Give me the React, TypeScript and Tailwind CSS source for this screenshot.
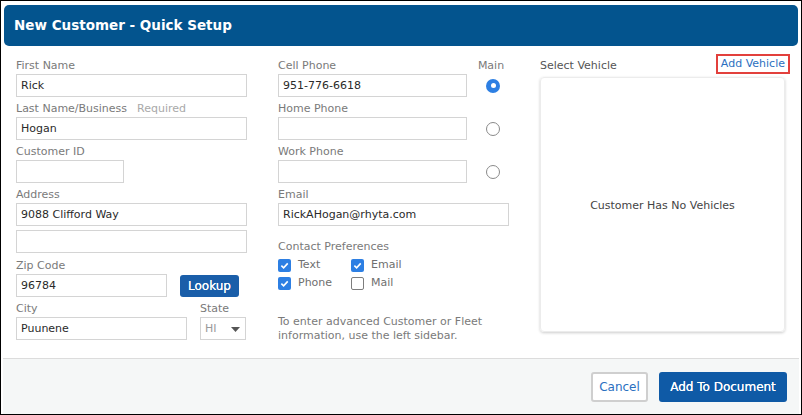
import React from 'react'

const font = { fontFamily: '"DejaVu Sans", Verdana, sans-serif' }

function Label({ children, extra }: { children: React.ReactNode; extra?: string }) {
  return (
    <div className="flex h-[16px] items-end gap-[10px] text-[11px] text-[#7a7a7a]">
      <span>{children}</span>
      {extra ? <span className="text-[#a9a9a9]">{extra}</span> : null}
    </div>
  )
}

function Input({ value, w }: { value?: string; w: string }) {
  return (
    <div
      className={`flex h-[23px] items-center border border-[#d4d4d4] bg-white pl-[4px] pt-[2px] text-[11px] text-[#2a2a2a] ${w}`}
    >
      {value}
    </div>
  )
}

function Radio({ checked }: { checked?: boolean }) {
  if (checked)
    return (
      <span className="flex h-[14px] w-[14px] items-center justify-center rounded-full bg-[#2d7fe3]">
        <span className="h-[5px] w-[5px] rounded-full bg-white" />
      </span>
    )
  return <span className="h-[14px] w-[14px] rounded-full border border-[#8a8a8a] bg-white" />
}

function Check({ checked, label }: { checked?: boolean; label: string }) {
  return (
    <div className="flex h-[18px] items-center gap-[7px] text-[11px] text-[#6f6f6f]">
      {checked ? (
        <span className="flex h-[13px] w-[13px] items-center justify-center rounded-[2px] bg-[#2d7fe3]">
          <svg width="9" height="9" viewBox="0 0 10 10">
            <path d="M1.5 5.2 L4 7.6 L8.6 2.6" fill="none" stroke="white" strokeWidth="1.8" />
          </svg>
        </span>
      ) : (
        <span className="h-[13px] w-[13px] rounded-[2px] border border-[#7d7d7d] bg-white" />
      )}
      <span>{label}</span>
    </div>
  )
}

export default function App() {
  return (
    <div
      className="flex h-[415px] w-[802px] flex-col border border-black bg-white"
      style={font}
    >
      <div className="mx-[3px] mt-[4px] flex h-[41px] items-center rounded-[5px] bg-[#03548e] pl-[10px] text-[13.5px] font-bold text-white">
        New Customer - Quick Setup
      </div>

      <div className="flex flex-1 pl-[15px]">
        {/* left column */}
        <div className="flex w-[231px] flex-col pt-[12px]">
          <Label>First Name</Label>
          <Input value="Rick" w="w-[231px]" />
          <div className="mt-[4px]" />
          <Label extra="Required">Last Name/Business</Label>
          <Input value="Hogan" w="w-[231px]" />
          <div className="mt-[4px]" />
          <Label>Customer ID</Label>
          <Input w="w-[108px]" />
          <div className="mt-[4px]" />
          <Label>Address</Label>
          <Input value="9088 Clifford Way" w="w-[231px]" />
          <div className="mt-[4px]" />
          <Input w="w-[231px]" />
          <div className="mt-[5px]" />
          <Label>Zip Code</Label>
          <div className="flex items-center gap-[13px]">
            <Input value="96784" w="w-[151px]" />
            <button className="flex h-[22px] w-[59px] items-center justify-center rounded-[3px] bg-[#1a5ea9] pt-[1px] text-[12px] text-white [text-shadow:0_0_0.4px_white]">
              Lookup
            </button>
          </div>
          <div className="mt-[4px]" />
          <div className="flex gap-[13px]">
            <div className="flex flex-col">
              <Label>City</Label>
              <Input value="Puunene" w="w-[171px]" />
            </div>
            <div className="flex flex-col">
              <Label>State</Label>
              <div className="flex h-[23px] w-[46px] items-center justify-between border border-[#d4d4d4] pl-[4px] pr-[5px] pt-[2px] text-[11px] text-[#9a9a9a]">
                <span>HI</span>
                <svg width="9" height="6" viewBox="0 0 9 6">
                  <path d="M0 0 H9 L4.5 5 Z" fill="#555" />
                </svg>
              </div>
            </div>
          </div>
        </div>

        {/* middle column */}
        <div className="ml-[31px] flex w-[231px] flex-col pt-[12px]">
          <div className="flex">
            <div className="flex w-[189px] flex-col">
              <Label>Cell Phone</Label>
              <Input value="951-776-6618" w="w-[189px]" />
              <div className="mt-[4px]" />
              <Label>Home Phone</Label>
              <Input w="w-[189px]" />
              <div className="mt-[4px]" />
              <Label>Work Phone</Label>
              <Input w="w-[189px]" />
            </div>
            <div className="ml-[11px] flex w-[26px] flex-col items-center">
              <Label>Main</Label>
              <div className="flex h-[23px] items-center pl-[4px]">
                <Radio checked />
              </div>
              <div className="mt-[20px] flex h-[23px] items-center pl-[4px]">
                <Radio />
              </div>
              <div className="mt-[20px] flex h-[23px] items-center pl-[4px]">
                <Radio />
              </div>
            </div>
          </div>
          <div className="mt-[4px]" />
          <Label>Email</Label>
          <Input value="RickAHogan@rhyta.com" w="w-[231px]" />
          <div className="mt-[13px]" />
          <Label>Contact Preferences</Label>
          <div className="mt-[1px] grid w-[150px] grid-cols-[73px_1fr]">
            <Check checked label="Text" />
            <Check checked label="Email" />
            <Check checked label="Phone" />
            <Check label="Mail" />
          </div>
          <div className="mt-[23px] text-[11px] leading-[14px] text-[#7a7a7a]">
            To enter advanced Customer or Fleet
            <br />
            information, use the left sidebar.
          </div>
        </div>

        {/* right column */}
        <div className="ml-[31px] flex w-[250px] flex-col pt-[8px]">
          <div className="flex h-[20px] items-center justify-between">
            <span className="pt-[4px] text-[11px] text-[#555]">Select Vehicle</span>
            <span className="flex h-[20px] items-center border-2 border-[#e2403c] px-[3px] pt-[1px] text-[11px] text-[#2b6fbf]">
              Add Vehicle
            </span>
          </div>
          <div className="mt-[3px] flex h-[255px] w-[245px] items-center justify-center rounded-[4px] border border-[#ececec] pt-[4px] text-[11px] text-[#444] shadow-[0_1px_3px_rgba(0,0,0,0.2)]">
            Customer Has No Vehicles
          </div>
        </div>
      </div>

      <div className="mx-[2px] flex h-[56px] items-start justify-end gap-[11px] border-t border-[#dcdcdc] bg-[#f5f7f7] pr-[12px] pt-[13px]">
        <button className="flex h-[30px] w-[57px] items-center justify-center rounded-[3px] border-2 border-[#cfcfcf] bg-white text-[12px] text-[#2b6fbf]">
          Cancel
        </button>
        <button className="flex h-[30px] w-[128px] items-center justify-center rounded-[3px] bg-[#0f5aa6] text-[12px] text-white [text-shadow:0_0_0.4px_white]">
          Add To Document
        </button>
      </div>
    </div>
  )
}
